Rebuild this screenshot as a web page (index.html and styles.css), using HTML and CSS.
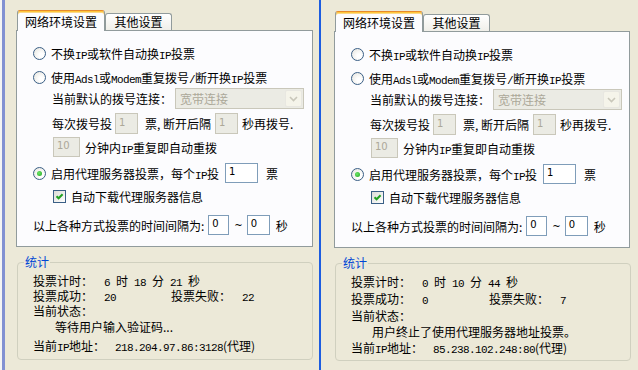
FILE: index.html
```html
<!DOCTYPE html>
<html lang="zh">
<head>
<meta charset="utf-8">
<link rel="stylesheet" href="styles.css">
</head>
<body>
<div class="screen">
  <div class="edge"><div class="edge-text"></div><div class="edge-bar"></div></div>

  <div class="shot shot-a">
    <div class="tabs">
      <div class="tab active">网络环境设置</div>
      <div class="tab">其他设置</div>
    </div>
    <div class="page">
      <div class="row r1"><span class="radio"></span><span class="lbl">不换<span class="m">IP</span>或软件自动换<span class="m">IP</span>投票</span></div>
      <div class="row r2"><span class="radio"></span><span class="lbl">使用<span class="m">Adsl</span>或<span class="m">Modem</span>重复拨号<span class="m">/</span>断开换<span class="m">IP</span>投票</span></div>
      <div class="row r3 ind"><span>当前默认的拨号连接：</span><span class="combo"><span class="combo-text">宽带连接</span><span class="combo-btn"><svg width="9" height="6" viewBox="0 0 9 6"><path d="M1 1 L4.5 4.5 L8 1" fill="none" stroke="#c9c7ba" stroke-width="1.6"/></svg></span></span></div>
      <div class="row r4 ind"><span>每次拨号投</span><span class="input dis w23 ml3">1</span><span class="ml7">票, 断开后隔</span><span class="input dis w23 ml4">1</span><span class="ml4">秒再拨号.</span></div>
      <div class="row r5 ind1"><span class="input dis w27">10</span><span class="ml5">分钟内<span class="m">IP</span>重复即自动重拨</span></div>
      <div class="row r6"><span class="radio on"></span><span class="lbl">启用代理服务器投票，每个<span class="m">IP</span>投</span><span class="input w33 ml6">1</span><span class="ml8">票</span></div>
      <div class="row r7 ind1"><span class="check"><svg width="11" height="11" viewBox="0 0 11 11"><path d="M2.5 5.2 L4.6 7.3 L8.6 3.2" fill="none" stroke="#21a121" stroke-width="2"/></svg></span><span class="lbl">自动下载代理服务器信息</span></div>
      <div class="row r8"><span>以上各种方式投票的时间间隔为:</span><span class="input w21 ml4">0</span><span class="ml5 tilde">~</span><span class="input w23 ml4">0</span><span class="ml6">秒</span></div>
    </div>
    <fieldset class="group">
      <legend>统计</legend>
      <div class="stats">
        <div class="stat"><span class="k">投票计时：</span><span class="m">6 </span>时<span class="m"> 18 </span>分<span class="m"> 21 </span>秒</div>
        <div class="stat l2"><span class="k">投票成功：</span><span class="v m">20</span><span class="k">投票失败：</span><span class="m">22</span></div>
        <div class="stat l3"><span class="k">当前状态：</span></div>
        <div class="stat l4 indent">等待用户输入验证码...</div>
        <div class="stat l5"><span class="k2">当前<span class="m">IP</span>地址：</span><span class="m">218.204.97.86:3128</span>(代理)</div>
      </div>
    </fieldset>
  </div>

  <div class="divider"></div>

  <div class="shot shot-b">
    <div class="tabs">
      <div class="tab active">网络环境设置</div>
      <div class="tab">其他设置</div>
    </div>
    <div class="page">
      <div class="row r1"><span class="radio"></span><span class="lbl">不换<span class="m">IP</span>或软件自动换<span class="m">IP</span>投票</span></div>
      <div class="row r2"><span class="radio"></span><span class="lbl">使用<span class="m">Adsl</span>或<span class="m">Modem</span>重复拨号<span class="m">/</span>断开换<span class="m">IP</span>投票</span></div>
      <div class="row r3 ind"><span>当前默认的拨号连接：</span><span class="combo"><span class="combo-text">宽带连接</span><span class="combo-btn"><svg width="9" height="6" viewBox="0 0 9 6"><path d="M1 1 L4.5 4.5 L8 1" fill="none" stroke="#c9c7ba" stroke-width="1.6"/></svg></span></span></div>
      <div class="row r4 ind"><span>每次拨号投</span><span class="input dis w23 ml3">1</span><span class="ml7">票, 断开后隔</span><span class="input dis w23 ml4">1</span><span class="ml4">秒再拨号.</span></div>
      <div class="row r5 ind1"><span class="input dis w27">10</span><span class="ml5">分钟内<span class="m">IP</span>重复即自动重拨</span></div>
      <div class="row r6"><span class="radio on"></span><span class="lbl">启用代理服务器投票，每个<span class="m">IP</span>投</span><span class="input w33 ml6">1</span><span class="ml8">票</span></div>
      <div class="row r7 ind1"><span class="check"><svg width="11" height="11" viewBox="0 0 11 11"><path d="M2.5 5.2 L4.6 7.3 L8.6 3.2" fill="none" stroke="#21a121" stroke-width="2"/></svg></span><span class="lbl">自动下载代理服务器信息</span></div>
      <div class="row r8"><span>以上各种方式投票的时间间隔为:</span><span class="input w21 ml4">0</span><span class="ml5 tilde">~</span><span class="input w23 ml4">0</span><span class="ml6">秒</span></div>
    </div>
    <fieldset class="group">
      <legend>统计</legend>
      <div class="stats">
        <div class="stat"><span class="k">投票计时：</span><span class="m">0 </span>时<span class="m"> 10 </span>分<span class="m"> 44 </span>秒</div>
        <div class="stat l2"><span class="k">投票成功：</span><span class="v m">0</span><span class="k">投票失败：</span><span class="m">7</span></div>
        <div class="stat l3"><span class="k">当前状态：</span></div>
        <div class="stat l4 indent">用户终止了使用代理服务器地址投票。</div>
        <div class="stat l5"><span class="k2">当前<span class="m">IP</span>地址：</span><span class="m">85.238.102.248:80</span>(代理)</div>
      </div>
    </fieldset>
  </div>
</div>
</body>
</html>
```

FILE: styles.css
```css
* { box-sizing: border-box; margin: 0; padding: 0; }
html, body { width: 638px; height: 370px; overflow: hidden; }
body {
  background: #ece9d8;
  font-family: "Noto Sans CJK SC", "Noto Sans", sans-serif;
  font-size: 12px;
  color: #000;
}
.screen { display: flex; height: 370px; }

.edge { width: 5px; display: flex; }
.edge-text { width: 2px; background: #f4f4f4; }
.edge-bar { width: 3px; background: #8291d2; }

.divider { width: 2px; background: #1d5de0; }

.shot { display: flex; flex-direction: column; }
.shot-a { width: 314px; padding: 10px 0 0 11px; }
.shot-b { width: 317px; padding: 11px 0 0 13px; }

.m {
  font-family: "Liberation Mono", "DejaVu Sans Mono", monospace;
  font-size: 11px;
  letter-spacing: -0.6px;
  white-space: pre;
}

/* tabs */
.tabs { display: flex; align-items: flex-end; height: 20px; margin-left: 1px; }
.tab {
  height: 17px;
  width: 67px;
  border: 1px solid #919b9c;
  border-bottom: none;
  border-radius: 3px 3px 0 0;
  background: linear-gradient(#ffffff, #f0efe9);
  line-height: 16px;
  text-align: center;
}
.tab.active {
  width: 88px;
  height: 21px;
  margin-bottom: -1px;
  position: relative;
  z-index: 1;
  background: #fcfcfe;
  border-top: 1px solid #e68b2c;
  box-shadow: inset 0 1px 0 #ffc83c, inset 0 2px 0 #fbd88a;
  padding-top: 2px;
  line-height: 18px;
}

/* tab page */
.page {
  width: 297px;
  height: 217px;
  border: 1px solid #919b9c;
  background: #fcfcfe;
  padding: 12px 0 0 16px;
}
.shot-b .page { width: 296px; }

.row { display: flex; align-items: center; height: 20px; white-space: nowrap; }
.r2 { margin-top: 4px; }
.r3 { margin-top: 1px; height: 21px; }
.r4 { margin-top: 3px; height: 22px; }
.r5 { margin-top: 3px; }
.r6 { margin-top: 6px; }
.r7 { margin-top: 3px; }
.r8 { margin-top: 9px; }
.ind { padding-left: 19px; }
.ind1 { padding-left: 20px; }
.lbl { margin-left: 5px; }

.ml3 { margin-left: 3px; }
.ml4 { margin-left: 4px; }
.ml5 { margin-left: 5px; }
.ml6 { margin-left: 6px; }
.ml7 { margin-left: 7px; }
.ml8 { margin-left: 8px; }
.tilde { font-family: "DejaVu Sans", sans-serif; font-size: 10px; }

/* radio / check */
.radio {
  width: 13px; height: 13px; flex: none;
  border: 1px solid #3a5f86;
  border-radius: 50%;
  background: radial-gradient(circle at 65% 65%, #ffffff 20%, #e4e3dc 100%);
  position: relative;
}
.radio.on::after {
  content: "";
  position: absolute;
  left: 3px; top: 3px;
  width: 5px; height: 5px;
  border-radius: 50%;
  background: radial-gradient(circle at 40% 40%, #6be867, #21a121);
}
.check {
  width: 13px; height: 13px; flex: none;
  border: 1px solid #3a5f86;
  background: linear-gradient(135deg, #dcdcd7, #ffffff);
  display: flex; align-items: center; justify-content: center;
}

/* inputs */
.input {
  height: 20px; flex: none;
  border: 1px solid #7f9db9;
  background: #fff;
  font-family: "DejaVu Sans", sans-serif;
  font-size: 10px;
  line-height: 16px;
  padding: 0 0 0 3px;
  color: #000;
}
.r4 .input { height: 21px; line-height: 17px; }
.input.dis { border-color: #c9c7ba; background: #ebebe4; color: #aca899; }
.w21 { width: 21px; }
.w23 { width: 23px; }
.w27 { width: 27px; }
.w33 { width: 33px; }

.combo {
  margin-left: 3px;
  width: 129px; height: 21px;
  border: 1px solid #c9c7ba;
  background: #ebebe4;
  display: flex; align-items: center; justify-content: space-between;
  padding: 1px;
}
.combo-text { color: #aca899; padding-left: 3px; }
.combo-btn {
  width: 17px; height: 17px;
  border: 1px solid #e8e7e1;
  border-radius: 2px;
  background: #f5f4ea;
  display: flex; align-items: center; justify-content: center;
}

/* group */
.group {
  margin-top: 8px;
  margin-left: 1px;
  width: 296px;
  height: 105px;
  border: 1px solid #d0d0bf;
  border-radius: 4px;
  padding: 0;
}
.group legend {
  color: #0046d5;
  margin-left: 6px;
  padding: 0 1px;
  line-height: 14px;
  font-size: 12px;
}
.stats { padding: 4px 0 0 15px; }
.stat { line-height: 15px; height: 15px; white-space: nowrap; }
.l4 { margin-top: 1px; }
.l5 { margin-top: 4px; }
.shot-b .stats { padding-top: 4px; }
.shot-b .stat { line-height: 16px; height: 16px; }
.shot-b .l2, .shot-b .l3 { margin-top: 1px; }
.shot-b .l4, .shot-b .l5 { margin-top: 0; }
.k { display: inline-block; width: 71px; }
.v { display: inline-block; width: 67px; }
.k2 { display: inline-block; width: 82px; }
.indent { padding-left: 22px; }
.shot-b .indent { padding-left: 21px; }
```
